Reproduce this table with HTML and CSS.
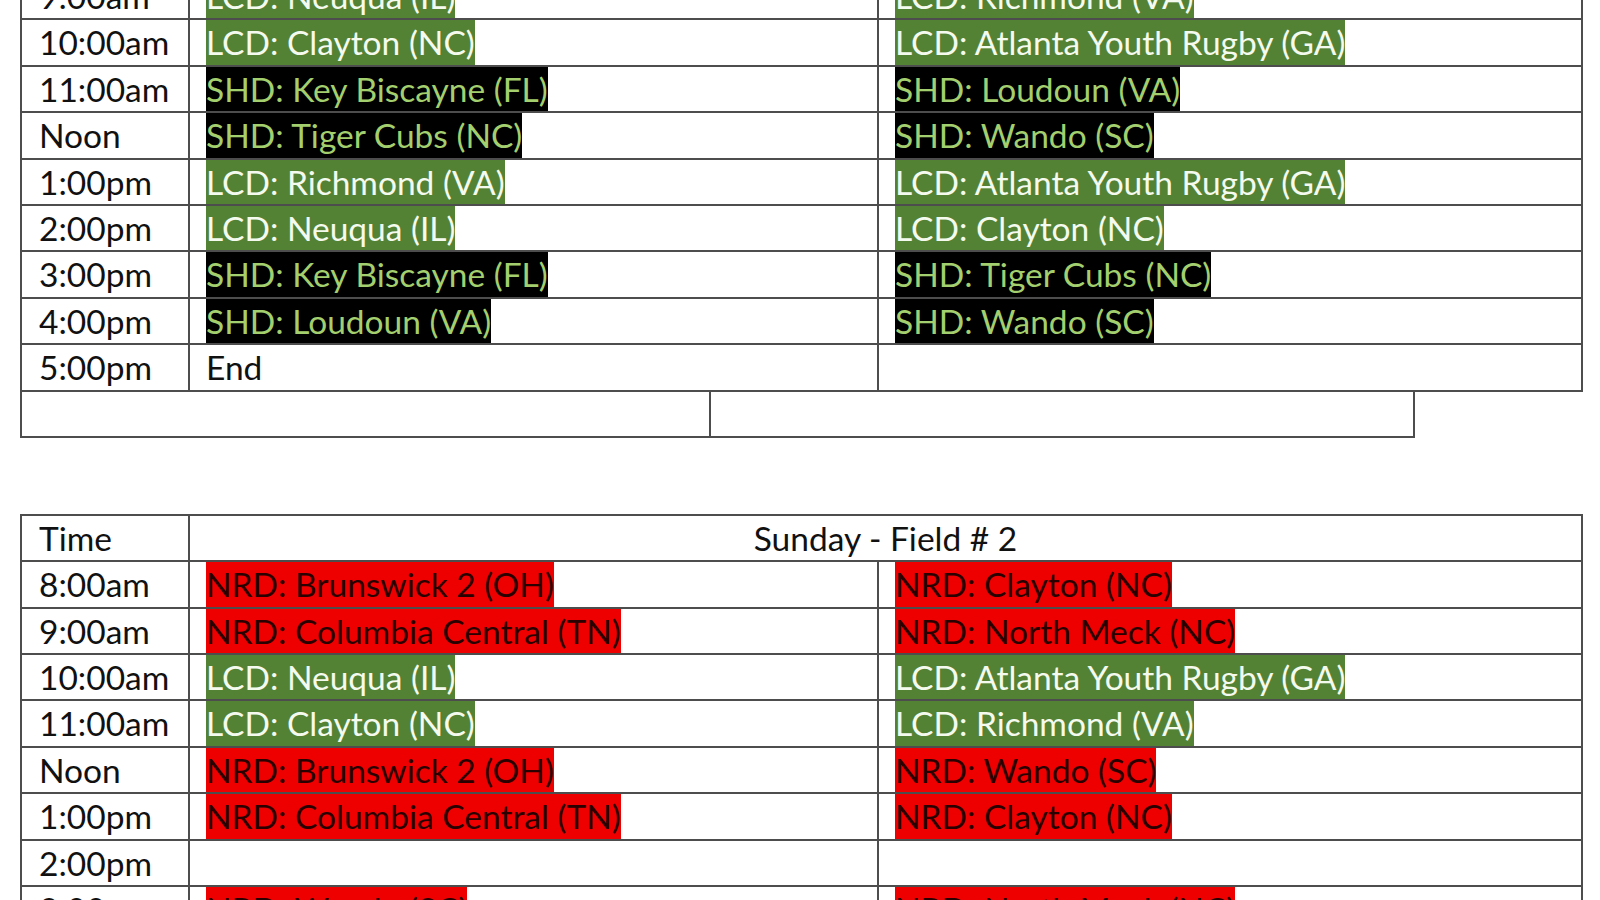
FILE: index.html
```html
<!DOCTYPE html>
<html>
<head>
<meta charset="utf-8">
<link rel="stylesheet" href="styles.css">
</head>
<body>
<div class="page">
  <table class="sched first">
    <colgroup><col class="c-time"><col class="c-a"><col class="c-b"></colgroup>
    <tr><td class="time">9:00am</td><td><span class="hl lcd">LCD: Neuqua (IL)</span></td><td><span class="hl lcd">LCD: Richmond (VA)</span></td></tr>
    <tr><td class="time">10:00am</td><td><span class="hl lcd">LCD: Clayton (NC)</span></td><td><span class="hl lcd">LCD: Atlanta Youth Rugby (GA)</span></td></tr>
    <tr><td class="time">11:00am</td><td><span class="hl shd">SHD: Key Biscayne (FL)</span></td><td><span class="hl shd">SHD: Loudoun (VA)</span></td></tr>
    <tr><td class="time">Noon</td><td><span class="hl shd">SHD: Tiger Cubs (NC)</span></td><td><span class="hl shd">SHD: Wando (SC)</span></td></tr>
    <tr><td class="time">1:00pm</td><td><span class="hl lcd">LCD: Richmond (VA)</span></td><td><span class="hl lcd">LCD: Atlanta Youth Rugby (GA)</span></td></tr>
    <tr><td class="time">2:00pm</td><td><span class="hl lcd">LCD: Neuqua (IL)</span></td><td><span class="hl lcd">LCD: Clayton (NC)</span></td></tr>
    <tr><td class="time">3:00pm</td><td><span class="hl shd">SHD: Key Biscayne (FL)</span></td><td><span class="hl shd">SHD: Tiger Cubs (NC)</span></td></tr>
    <tr><td class="time">4:00pm</td><td><span class="hl shd">SHD: Loudoun (VA)</span></td><td><span class="hl shd">SHD: Wando (SC)</span></td></tr>
    <tr><td class="time">5:00pm</td><td><span class="plain">End</span></td><td></td></tr>
  </table>
  <table class="sched extra">
    <colgroup><col class="c-a"><col class="c-b"></colgroup>
    <tr><td></td><td></td></tr>
  </table>

  <table class="sched second">
    <colgroup><col class="c-time"><col class="c-a"><col class="c-b"></colgroup>
    <tr><td class="time">Time</td><td colspan="2" class="title">Sunday - Field # 2</td></tr>
    <tr><td class="time">8:00am</td><td><span class="hl nrd">NRD: Brunswick 2 (OH)</span></td><td><span class="hl nrd">NRD: Clayton (NC)</span></td></tr>
    <tr><td class="time">9:00am</td><td><span class="hl nrd">NRD: Columbia Central (TN)</span></td><td><span class="hl nrd">NRD: North Meck (NC)</span></td></tr>
    <tr><td class="time">10:00am</td><td><span class="hl lcd">LCD: Neuqua (IL)</span></td><td><span class="hl lcd">LCD: Atlanta Youth Rugby (GA)</span></td></tr>
    <tr><td class="time">11:00am</td><td><span class="hl lcd">LCD: Clayton (NC)</span></td><td><span class="hl lcd">LCD: Richmond (VA)</span></td></tr>
    <tr><td class="time">Noon</td><td><span class="hl nrd">NRD: Brunswick 2 (OH)</span></td><td><span class="hl nrd">NRD: Wando (SC)</span></td></tr>
    <tr><td class="time">1:00pm</td><td><span class="hl nrd">NRD: Columbia Central (TN)</span></td><td><span class="hl nrd">NRD: Clayton (NC)</span></td></tr>
    <tr><td class="time">2:00pm</td><td></td><td></td></tr>
    <tr><td class="time">3:00pm</td><td><span class="hl nrd">NRD: Wando (SC)</span></td><td><span class="hl nrd">NRD: North Meck (NC)</span></td></tr>
  </table>
</div>
</body>
</html>
```

FILE: styles.css
```css
html, body {
  margin: 0;
  padding: 0;
  background: #ffffff;
  overflow: hidden;
}
.page {
  padding-left: 20px;
  font-family: Lato, "Liberation Sans", sans-serif;
  font-size: 33.5px;
  color: #111;
  height: 900px;
  overflow: hidden;
}
.sched {
  border-collapse: collapse;
  table-layout: fixed;
  width: 1561px;
}
.sched td {
  border: 2px solid #4d4d4d;
  height: 44.4px;
  padding: 0 0 0 16px;
  line-height: 44px;
  white-space: nowrap;
  overflow: hidden;
  vertical-align: top;
}
.sched td.time {
  padding-left: 17px;
}
.c-time { width: 168px; }
.c-a { width: 689px; }
.c-b { width: 704px; }
.first {
  margin-top: -28px;
}
.extra {
  width: 1393px;
  margin-top: -2px;
}
.second {
  margin-top: 76px;
}
.title {
  text-align: center;
  padding-left: 0 !important;
}
.hl {
  display: inline-block;
  height: 44.4px;
  line-height: 44px;
}
.lcd {
  background: #548235;
  color: #f4faee;
}
.shd {
  background: #000000;
  color: #a3cf6e;
}
.nrd {
  background: #ee0000;
  color: #2a0000;
}
```
